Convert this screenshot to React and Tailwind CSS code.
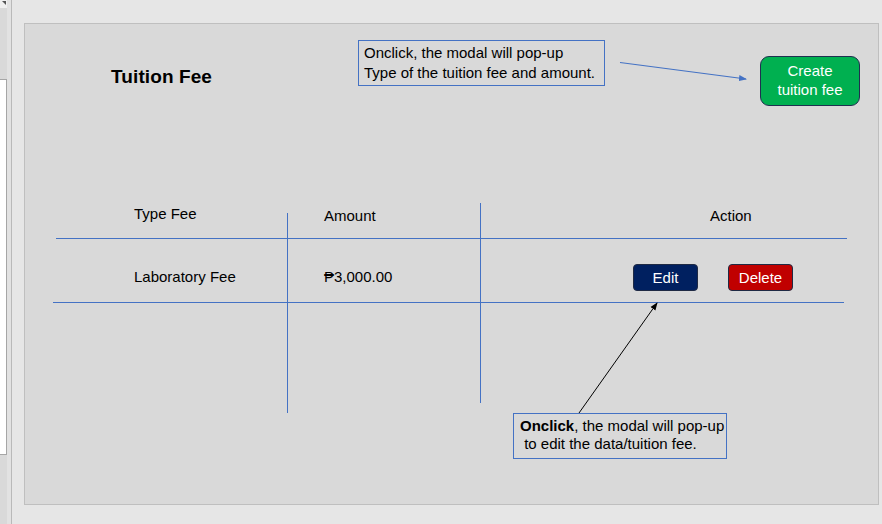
export default function App() {
  const font = "font-['Liberation_Sans',Arial,sans-serif]";

  return (
    <div className={`flex h-[524px] w-[882px] overflow-hidden bg-[#e6e6e6] text-black ${font}`}>
      {/* left strip of the neighbouring pane */}
      <div className="flex w-[7px] flex-col bg-[#d9d9d9]">
        <div className="relative h-[8px] bg-[#f0f0f0]">
          <div className="absolute right-[1px] top-[1px] h-0 w-0 border-l-[4px] border-t-[4px] border-l-transparent border-t-[#555]" />
        </div>
        <div className="h-[71px]" />
        <div className="h-[376px] border-r border-t border-b border-[#a6a6a6] bg-white" />
      </div>
      <div className="w-[4px] bg-[#e2e2e2]" />
      <div className="w-px bg-[#b9b9b9]" />

      <div className="flex-1 pl-[12px] pt-[23px]">
        <div className="relative h-[482px] w-[855px] border border-[#bfbfbf] bg-[#d9d9d9]">
          {/* header row */}
          <div className="flex h-[82px] items-start">
            <div className="w-[333px] pl-[86px] pt-[41px]">
              <h1 className="text-[19px] font-bold leading-[24px] tracking-[0.1px]">Tuition Fee</h1>
            </div>
            <div className="mt-[16px] h-[46px] w-[247px] border border-[#4472c4] pl-[5px] pt-[2px] text-[15px] leading-[20px]">
              <p>Onclick, the modal will pop-up</p>
              <p>Type of the tuition fee and amount.</p>
            </div>
            <button className="ml-[155px] mt-[32px] flex h-[50px] w-[100px] flex-col items-center justify-center rounded-[9px] border border-[#1f3050] bg-[#00b050] text-[15px] leading-[18.7px] text-white">
              <span>Create</span>
              <span>tuition fee</span>
            </button>
          </div>

          {/* table */}
          <div className="mt-[97px]">
            <div className="grid h-[36px] grid-cols-[263px_193px_1fr] text-[15px] leading-[20px]">
              <div className="pl-[109px] pt-[1px]">Type Fee</div>
              <div className="pl-[36px] pt-[2.5px]">Amount</div>
              <div className="pl-[229px] pt-[2.5px]">Action</div>
            </div>
            <div className="grid h-[64px] grid-cols-[263px_193px_1fr] text-[15px] leading-[20px]">
              <div className="pl-[109px] pt-[27.5px]">Laboratory Fee</div>
              <div className="pl-[36px] pt-[27.5px]">₱3,000.00</div>
              <div className="flex gap-[30px] pl-[152px] pt-[25px]">
                <button className="h-[27px] w-[65px] rounded-[4px] border border-[#1f2a44] bg-[#002060] text-[15px] text-white">
                  Edit
                </button>
                <button className="h-[27px] w-[65px] rounded-[4px] border border-[#1f2a44] bg-[#c00000] text-[15px] text-white">
                  Delete
                </button>
              </div>
            </div>
          </div>

          {/* bottom callout */}
          <div className="ml-[488px] mt-[110px] h-[46px] w-[214px] border border-[#4472c4] bg-[#d9d9d9] pl-[6px] pt-[3px] text-[15px] leading-[18.4px]">
            <p>
              <b>Onclick</b>, the modal will pop-up
            </p>
            <p className="whitespace-pre"> to edit the data/tuition fee.</p>
          </div>

          {/* table rules and annotation arrows */}
          <svg className="pointer-events-none absolute inset-0 h-full w-full" viewBox="0 0 853 480">
            <defs>
              <marker id="ab" markerWidth="8" markerHeight="8" refX="7" refY="4" orient="auto" markerUnits="userSpaceOnUse">
                <path d="M0 1 L8 4 L0 7 Z" fill="#4472c4" />
              </marker>
              <marker id="ak" markerWidth="8" markerHeight="8" refX="7" refY="4" orient="auto" markerUnits="userSpaceOnUse">
                <path d="M0 1 L8 4 L0 7 Z" fill="#000" />
              </marker>
            </defs>
            <line x1="31" y1="214.5" x2="822" y2="214.5" stroke="#4472c4" strokeWidth="1" />
            <line x1="28" y1="278.5" x2="819" y2="278.5" stroke="#4472c4" strokeWidth="1" />
            <line x1="262.5" y1="189" x2="262.5" y2="389" stroke="#4472c4" strokeWidth="1" />
            <line x1="455.5" y1="179" x2="455.5" y2="379" stroke="#4472c4" strokeWidth="1" />
            <line x1="595" y1="38.5" x2="721" y2="55" stroke="#4472c4" strokeWidth="1.2" markerEnd="url(#ab)" />
            <line x1="554" y1="389" x2="632" y2="279" stroke="#000" strokeWidth="1" markerEnd="url(#ak)" />
          </svg>
        </div>
      </div>
    </div>
  );
}
